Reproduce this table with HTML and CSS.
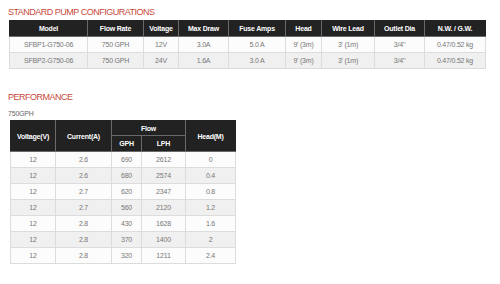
FILE: index.html
```html
<!DOCTYPE html>
<html>
<head>
<meta charset="utf-8">
<link rel="stylesheet" href="styles.css">
</head>
<body>
<div class="page">
  <h2 class="title">STANDARD PUMP CONFIGURATIONS</h2>
  <table class="spec t1">
    <colgroup>
      <col style="width:78px"><col style="width:56px"><col style="width:35px"><col style="width:50px"><col style="width:57px"><col style="width:36px"><col style="width:53px"><col style="width:50px"><col style="width:61px">
    </colgroup>
    <thead>
      <tr><th>Model</th><th>Flow Rate</th><th>Voltage</th><th>Max Draw</th><th>Fuse Amps</th><th>Head</th><th>Wire Lead</th><th>Outlet Dia</th><th>N.W. / G.W.</th></tr>
    </thead>
    <tbody>
      <tr><td>SFBP1-G750-06</td><td>750 GPH</td><td>12V</td><td>3.0A</td><td>5.0 A</td><td>9' (3m)</td><td>3' (1m)</td><td>3/4"</td><td>0.47/0.52 kg</td></tr>
      <tr><td>SFBP2-G750-06</td><td>750 GPH</td><td>24V</td><td>1.6A</td><td>3.0 A</td><td>9' (3m)</td><td>3' (1m)</td><td>3/4"</td><td>0.47/0.52 kg</td></tr>
    </tbody>
  </table>

  <h2 class="title perf">PERFORMANCE</h2>
  <div class="sub">750GPH</div>
  <table class="spec t2">
    <colgroup>
      <col style="width:45px"><col style="width:56px"><col style="width:30px"><col style="width:44px"><col style="width:50px">
    </colgroup>
    <thead>
      <tr class="r-flow"><th rowspan="2">Voltage(V)</th><th rowspan="2">Current(A)</th><th colspan="2">Flow</th><th rowspan="2">Head(M)</th></tr>
      <tr><th>GPH</th><th>LPH</th></tr>
    </thead>
    <tbody>
      <tr><td>12</td><td>2.6</td><td>690</td><td>2612</td><td>0</td></tr>
      <tr><td>12</td><td>2.6</td><td>680</td><td>2574</td><td>0.4</td></tr>
      <tr><td>12</td><td>2.7</td><td>620</td><td>2347</td><td>0.8</td></tr>
      <tr><td>12</td><td>2.7</td><td>560</td><td>2120</td><td>1.2</td></tr>
      <tr><td>12</td><td>2.8</td><td>430</td><td>1628</td><td>1.6</td></tr>
      <tr><td>12</td><td>2.8</td><td>370</td><td>1400</td><td>2</td></tr>
      <tr><td>12</td><td>2.8</td><td>320</td><td>1211</td><td>2.4</td></tr>
    </tbody>
  </table>
</div>
</body>
</html>
```

FILE: styles.css
```css
html, body {
  margin: 0;
  padding: 0;
  background: #fff;
}
.page {
  padding: 7px 0 0 8px;
  font-family: "Liberation Sans", Arial, sans-serif;
}
.title {
  margin: 0;
  font-size: 9px;
  line-height: 11px;
  font-weight: normal;
  letter-spacing: -0.5px;
  color: #c8493a;
}
.perf {
  margin-top: 23px;
}
.sub {
  font-size: 7px;
  line-height: 8px;
  letter-spacing: -0.2px;
  color: #666;
  margin-top: 7px;
}
.spec {
  border-collapse: collapse;
  table-layout: fixed;
  margin-top: 2px;
  font-size: 7px;
  letter-spacing: -0.2px;
}
.t1 {
  margin-left: 1px;
  width: 476px;
}
.t2 {
  margin-left: 2px;
  width: 225px;
}
.spec th {
  background: #222;
  color: #fff;
  font-weight: bold;
  height: 15px;
  padding: 0;
  border: 1px solid #6a6a6a;
  border-top-color: #222;
  text-align: center;
}
.t2 .r-flow th {
  height: 14px;
}
.spec thead tr:first-child th {
  border-top: 1px solid #222;
}
.spec th:first-child {
  border-left-color: #222;
}
.spec th:last-child {
  border-right-color: #222;
}
.spec td {
  height: 15px;
  padding: 0;
  border: 1px solid #dcdcdc;
  color: #777;
  text-align: center;
}
.spec tbody tr:nth-child(odd) td {
  background: #fcfcfc;
}
.spec tbody tr:nth-child(even) td {
  background: #f0f0f0;
}
```
